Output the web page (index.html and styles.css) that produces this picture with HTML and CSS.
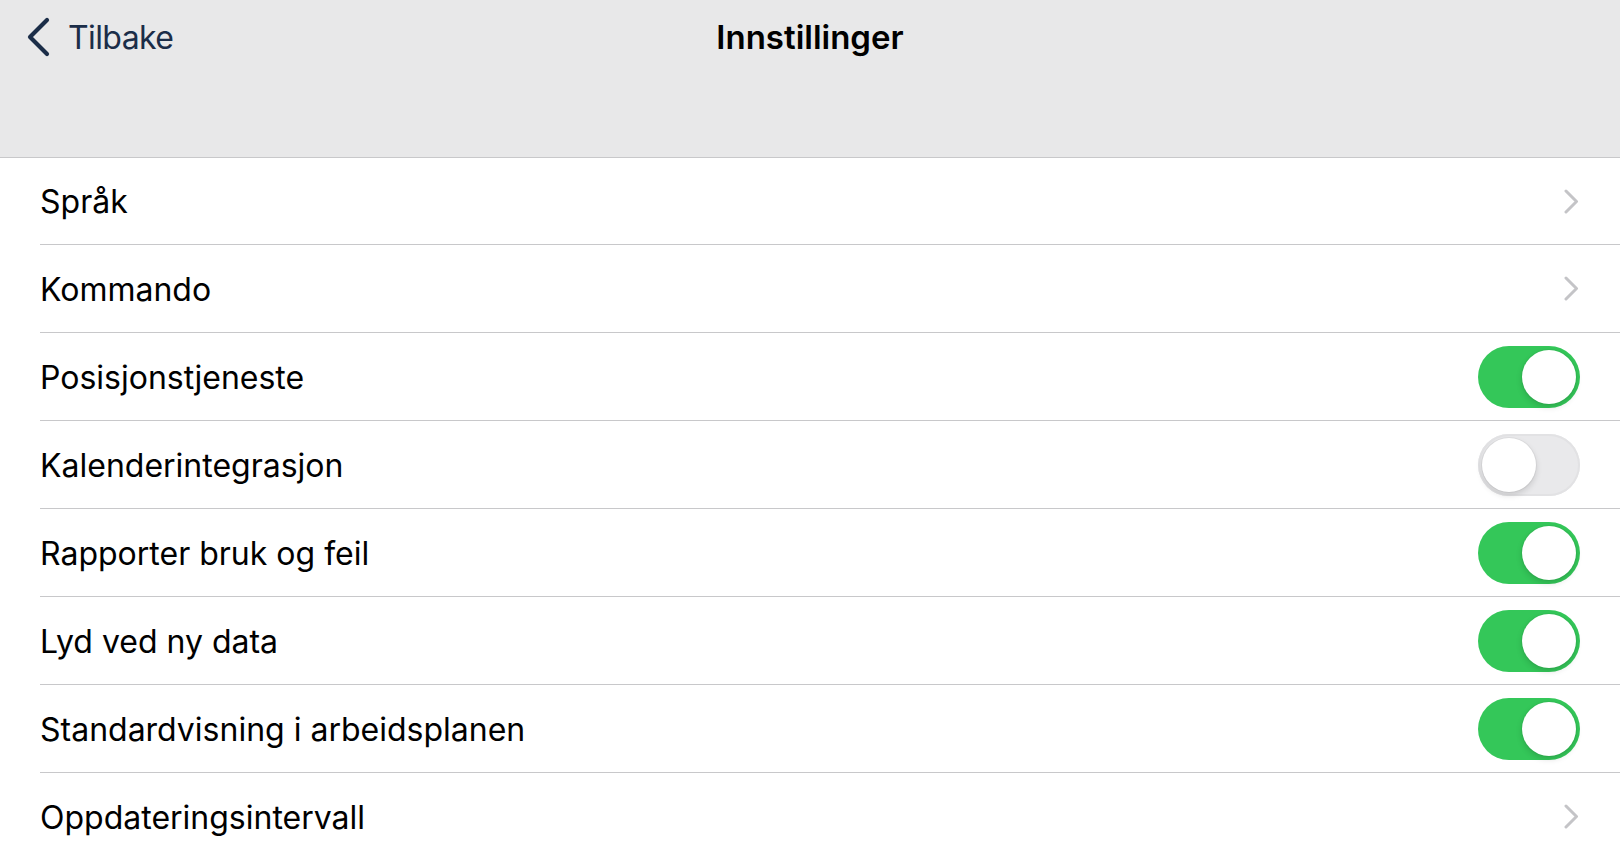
FILE: index.html
```html
<!DOCTYPE html>
<html lang="no">
<head>
<meta charset="utf-8">
<title>Innstillinger</title>
<link rel="stylesheet" href="styles.css">
</head>
<body>
<header class="navbar">
  <div class="navbar-top">
    <a class="back" href="#">
      <svg class="back-icon" width="24" height="40" viewBox="0 0 24 40" aria-hidden="true">
        <polyline points="21,3 4,20 21,37" fill="none" stroke="currentColor" stroke-width="4.2" stroke-linecap="round" stroke-linejoin="round"/>
      </svg>
      <span class="back-label">Tilbake</span>
    </a>
    <h1 class="title">Innstillinger</h1>
    <div class="spacer"></div>
  </div>
</header>
<main class="list">
  <div class="row first">
    <div class="row-inner">
      <span class="label">Språk</span>
      <span class="accessory"><svg class="chevron" width="15" height="25" viewBox="0 0 15 25"><polyline points="2,2 12.5,12.5 2,23" fill="none" stroke="currentColor" stroke-width="3" stroke-linecap="round" stroke-linejoin="round"/></svg></span>
    </div>
  </div>
  <div class="row">
    <div class="row-inner">
      <span class="label">Kommando</span>
      <span class="accessory"><svg class="chevron" width="15" height="25" viewBox="0 0 15 25"><polyline points="2,2 12.5,12.5 2,23" fill="none" stroke="currentColor" stroke-width="3" stroke-linecap="round" stroke-linejoin="round"/></svg></span>
    </div>
  </div>
  <div class="row">
    <div class="row-inner">
      <span class="label">Posisjonstjeneste</span>
      <span class="switch on"></span>
    </div>
  </div>
  <div class="row">
    <div class="row-inner">
      <span class="label">Kalenderintegrasjon</span>
      <span class="switch"></span>
    </div>
  </div>
  <div class="row">
    <div class="row-inner">
      <span class="label">Rapporter bruk og feil</span>
      <span class="switch on"></span>
    </div>
  </div>
  <div class="row">
    <div class="row-inner">
      <span class="label">Lyd ved ny data</span>
      <span class="switch on"></span>
    </div>
  </div>
  <div class="row">
    <div class="row-inner">
      <span class="label">Standardvisning i arbeidsplanen</span>
      <span class="switch on"></span>
    </div>
  </div>
  <div class="row">
    <div class="row-inner">
      <span class="label">Oppdateringsintervall</span>
      <span class="accessory"><svg class="chevron" width="15" height="25" viewBox="0 0 15 25"><polyline points="2,2 12.5,12.5 2,23" fill="none" stroke="currentColor" stroke-width="3" stroke-linecap="round" stroke-linejoin="round"/></svg></span>
    </div>
  </div>
</main>
</body>
</html>
```

FILE: styles.css
```css
* {
  box-sizing: border-box;
}

html, body {
  margin: 0;
  padding: 0;
  background: #ffffff;
  height: 100%;
  overflow: hidden;
}

body {
  font-family: Inter, "Liberation Sans", Arial, sans-serif;
  color: #000000;
}

.navbar {
  height: 158px;
  background: #e8e8e9;
  border-bottom: 1px solid #c8c8ca;
}

.navbar-top {
  height: 74px;
  display: grid;
  grid-template-columns: 1fr auto 1fr;
  align-items: center;
}

.back {
  display: flex;
  align-items: center;
  color: #1b2d48;
  text-decoration: none;
  padding-left: 26px;
}

.back-icon {
  display: block;
}

.back-label {
  margin-left: 18px;
  font-size: 32px;
  font-weight: 400;
  letter-spacing: -0.6px;
}

.title {
  margin: 0;
  font-size: 33px;
  font-weight: 600;
  color: #000000;
  letter-spacing: 0;
}

.list {
  display: flex;
  flex-direction: column;
}

.row {
  padding-left: 40px;
}

.row-inner {
  height: 88px;
  display: flex;
  align-items: center;
  justify-content: space-between;
  border-bottom: 1px solid #c8c8ca;
  padding-right: 40px;
}

.row.first .row-inner {
  height: 87px;
}

.label {
  font-size: 32px;
  font-weight: 400;
  letter-spacing: 0;
  padding-top: 1px;
}

.accessory {
  display: flex;
  align-items: center;
  color: #c4c4c7;
  padding-right: 1px;
}

.chevron {
  display: block;
}

.switch {
  position: relative;
  width: 102px;
  height: 62px;
  border-radius: 31px;
  background: #e9e9eb;
  box-shadow: inset 0 0 0 2px #e2e2e4;
  flex: none;
}

.switch::after {
  content: "";
  position: absolute;
  top: 4px;
  left: 4px;
  width: 54px;
  height: 54px;
  border-radius: 50%;
  background: #ffffff;
  box-shadow: 0 3px 6px rgba(0, 0, 0, 0.15), 0 0 0 1px rgba(0, 0, 0, 0.04);
}

.switch.on {
  background: #34c759;
  box-shadow: none;
}

.switch.on::after {
  left: 44px;
}
```
